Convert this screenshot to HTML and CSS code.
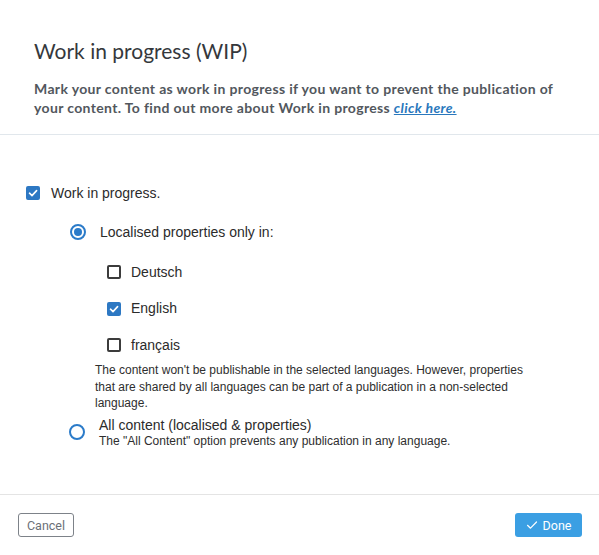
FILE: index.html
```html
<!DOCTYPE html>
<html lang="en">
<head>
<meta charset="utf-8">
<title>Work in progress (WIP)</title>
<link rel="stylesheet" href="styles.css">
</head>
<body>
<div class="dialog">
  <header class="head">
    <h1 class="title">Work in progress (WIP)</h1>
    <p class="desc">Mark your content as work in progress if you want to prevent the publication of your content. To find out more about Work in progress <a class="link" href="#">click here.</a></p>
  </header>
  <main class="body">
    <div class="row main-row">
      <span class="cb checked"><svg viewBox="0 0 14 14" width="14" height="14"><path d="M3.5 7.2 L6 9.6 L10.6 4.6" fill="none" stroke="#fff" stroke-width="1.6" stroke-linecap="round" stroke-linejoin="round"/></svg></span>
      <span class="label">Work in progress.</span>
    </div>
    <div class="row radio-row">
      <span class="radio on"></span>
      <span class="label">Localised properties only in:</span>
    </div>
    <div class="langs">
      <div class="row lang"><span class="cb small"></span><span class="label">Deutsch</span></div>
      <div class="row lang"><span class="cb small checked"><svg viewBox="0 0 14 14" width="14" height="14"><path d="M3.5 7.2 L6 9.6 L10.6 4.6" fill="none" stroke="#fff" stroke-width="1.6" stroke-linecap="round" stroke-linejoin="round"/></svg></span><span class="label">English</span></div>
      <div class="row lang"><span class="cb small"></span><span class="label">français</span></div>
    </div>
    <p class="help">The content won't be publishable in the selected languages. However, properties that are shared by all languages can be part of a publication in a non-selected language.</p>
    <div class="all-row">
      <span class="radio"></span>
      <div class="all-text">
        <div class="label">All content (localised &amp; properties)</div>
        <div class="sub">The "All Content" option prevents any publication in any language.</div>
      </div>
    </div>
  </main>
  <footer class="foot">
    <button class="btn cancel">Cancel</button>
    <button class="btn done"><svg viewBox="0 0 12 12" width="12" height="12"><path d="M1.5 6.3 L4.5 9.2 L10.5 3" fill="none" stroke="#fff" stroke-width="1.2" stroke-linecap="round" stroke-linejoin="round"/></svg>Done</button>
  </footer>
</div>
</body>
</html>
```
FILE: styles.css
```css
* { box-sizing: border-box; }
html, body { margin: 0; padding: 0; background: #fff; }
body { width: 599px; height: 555px; overflow: hidden; }

.dialog { display: flex; flex-direction: column; height: 555px; }

.head {
  padding: 38px 34px 17px 34px;
  border-bottom: 1px solid #e1e7ec;
}
.title {
  margin: 0;
  font-family: "Lato", "Open Sans", sans-serif;
  font-weight: 400;
  font-size: 21px;
  line-height: 25px;
  color: #35383c;
}
.desc {
  margin: 16px 0 0 0;
  max-width: 522px;
  font-family: "Lato", "Open Sans", sans-serif;
  font-weight: 700;
  font-size: 14px;
  letter-spacing: 0.35px;
  line-height: 19px;
  color: #52575d;
}
.link { color: #2a78bd; font-style: italic; text-decoration: underline; }

.body {
  flex: 1;
  padding: 48px 0 0 26px;
  font-family: "Liberation Sans", Arial, sans-serif;
  color: #2a2a2a;
}
.row { display: flex; align-items: center; height: 20px; }
.label { font-size: 14px; line-height: 17px; color: #2b2b2b; }

.cb {
  width: 14px; height: 14px;
  border: 2px solid #3c3c3c;
  border-radius: 2px;
  display: inline-flex; align-items: center; justify-content: center;
  flex: none;
}
.cb.checked { background: #2d78c3; border-color: #2d78c3; }
.cb svg { flex: none; }
.main-row .cb { margin-right: 11px; }

.radio-row { margin: 19px 0 0 44px; }
.radio {
  width: 16px; height: 16px;
  border: 2px solid #2b7bc9;
  border-radius: 50%;
  flex: none;
  display: inline-flex; align-items: center; justify-content: center;
  margin-right: 14px;
}
.radio.on::after {
  content: ""; width: 8px; height: 8px; border-radius: 50%; background: #2b7bc9;
}

.langs { margin: 20px 0 0 81px; display: flex; flex-direction: column; gap: 16.5px; }
.lang .cb { width: 14px; height: 14px; margin-right: 10px; }

.help {
  margin: 7px 0 0 69px;
  width: 430px;
  font-size: 12px;
  line-height: 16.5px;
  color: #2e2e2e;
}
.all-row { display: flex; align-items: center; margin: 4px 0 0 43px; }
.all-row .radio { margin-top: 0; margin-right: 14px; }
.all-text .label { line-height: 18px; }
.sub { font-size: 12px; line-height: 15px; color: #2e2e2e; }

.foot {
  height: 61px;
  border-top: 1px solid #e4e4e4;
  display: flex; justify-content: space-between; align-items: flex-start;
  padding: 18px 17px 0 18px;
}
.btn {
  height: 24px;
  font-family: "Roboto", "Liberation Sans", sans-serif;
  font-size: 12.5px;
  border-radius: 3px;
  padding: 0;
  display: inline-flex; align-items: center; justify-content: center;
  cursor: pointer;
}
.cancel { width: 56px; background: #fff; border: 1px solid #7d8289; color: #6b7077; }
.done { width: 67px; background: #3b9fe3; border: none; color: #fff; gap: 5px; }
```
